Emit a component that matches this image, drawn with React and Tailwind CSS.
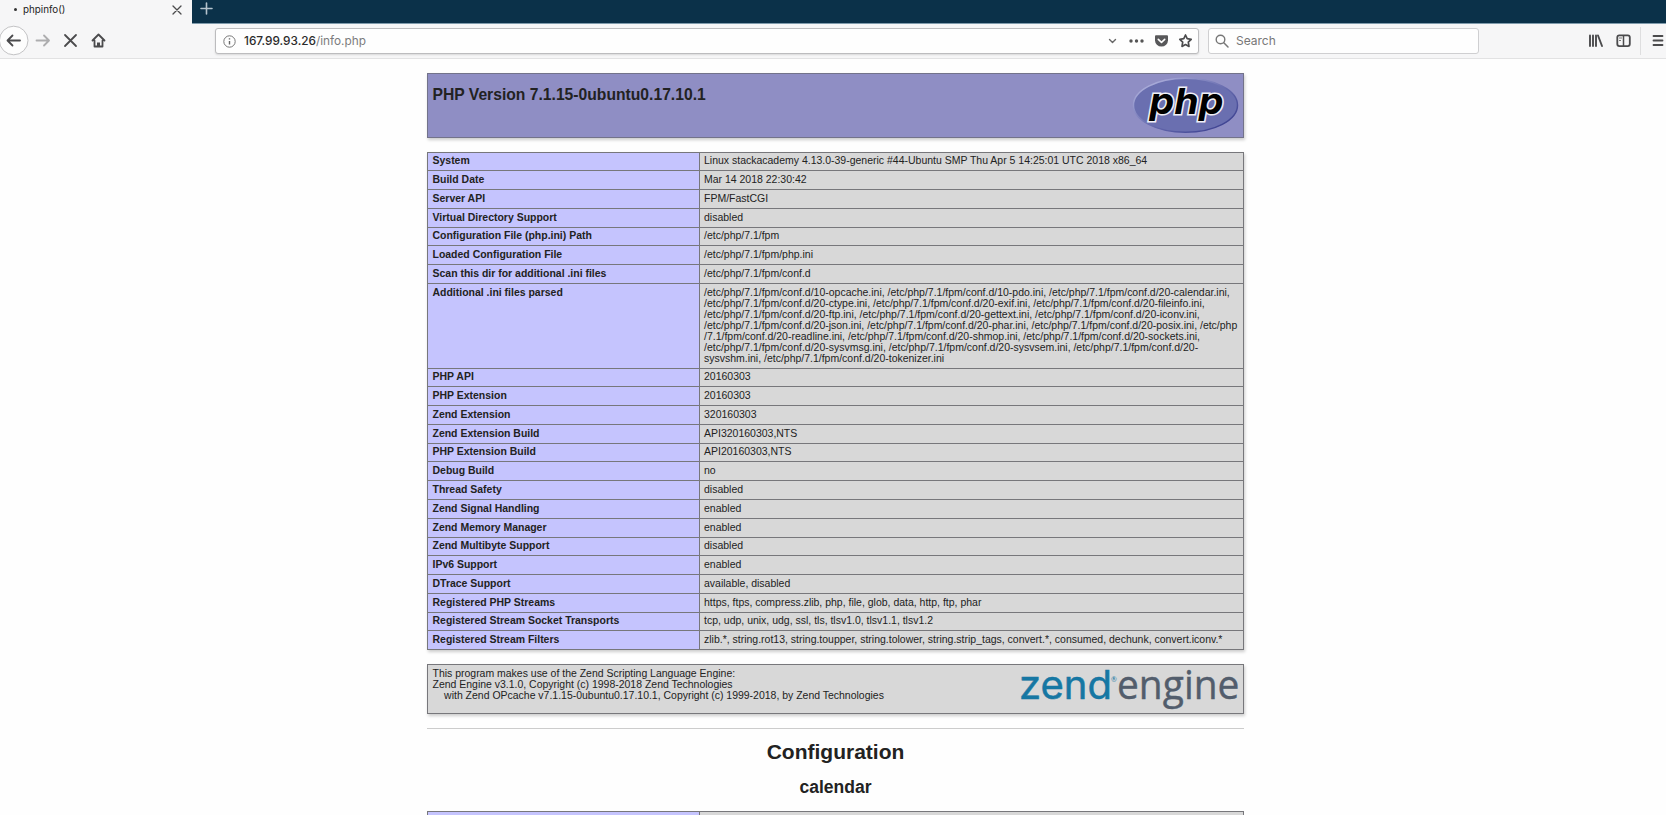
import React from "react";

const rows = [
  ["System", "Linux stackacademy 4.13.0-39-generic #44-Ubuntu SMP Thu Apr 5 14:25:01 UTC 2018 x86_64"],
  ["Build Date", "Mar 14 2018 22:30:42"],
  ["Server API", "FPM/FastCGI"],
  ["Virtual Directory Support", "disabled"],
  ["Configuration File (php.ini) Path", "/etc/php/7.1/fpm"],
  ["Loaded Configuration File", "/etc/php/7.1/fpm/php.ini"],
  ["Scan this dir for additional .ini files", "/etc/php/7.1/fpm/conf.d"],
  [
    "Additional .ini files parsed",
    [
      "/etc/php/7.1/fpm/conf.d/10-opcache.ini, /etc/php/7.1/fpm/conf.d/10-pdo.ini, /etc/php/7.1/fpm/conf.d/20-calendar.ini,",
      "/etc/php/7.1/fpm/conf.d/20-ctype.ini, /etc/php/7.1/fpm/conf.d/20-exif.ini, /etc/php/7.1/fpm/conf.d/20-fileinfo.ini,",
      "/etc/php/7.1/fpm/conf.d/20-ftp.ini, /etc/php/7.1/fpm/conf.d/20-gettext.ini, /etc/php/7.1/fpm/conf.d/20-iconv.ini,",
      "/etc/php/7.1/fpm/conf.d/20-json.ini, /etc/php/7.1/fpm/conf.d/20-phar.ini, /etc/php/7.1/fpm/conf.d/20-posix.ini, /etc/php",
      "/7.1/fpm/conf.d/20-readline.ini, /etc/php/7.1/fpm/conf.d/20-shmop.ini, /etc/php/7.1/fpm/conf.d/20-sockets.ini,",
      "/etc/php/7.1/fpm/conf.d/20-sysvmsg.ini, /etc/php/7.1/fpm/conf.d/20-sysvsem.ini, /etc/php/7.1/fpm/conf.d/20-",
      "sysvshm.ini, /etc/php/7.1/fpm/conf.d/20-tokenizer.ini",
    ],
  ],
  ["PHP API", "20160303"],
  ["PHP Extension", "20160303"],
  ["Zend Extension", "320160303"],
  ["Zend Extension Build", "API320160303,NTS"],
  ["PHP Extension Build", "API20160303,NTS"],
  ["Debug Build", "no"],
  ["Thread Safety", "disabled"],
  ["Zend Signal Handling", "enabled"],
  ["Zend Memory Manager", "enabled"],
  ["Zend Multibyte Support", "disabled"],
  ["IPv6 Support", "enabled"],
  ["DTrace Support", "available, disabled"],
  ["Registered PHP Streams", "https, ftps, compress.zlib, php, file, glob, data, http, ftp, phar"],
  ["Registered Stream Socket Transports", "tcp, udp, unix, udg, ssl, tls, tlsv1.0, tlsv1.1, tlsv1.2"],
  ["Registered Stream Filters", "zlib.*, string.rot13, string.toupper, string.tolower, string.strip_tags, convert.*, consumed, dechunk, convert.iconv.*"],
];

function Row({ label, value }) {
  const lines = Array.isArray(value) ? value : [value];
  return (
    <div className="flex border-t border-[#77777b]">
      <div className="w-[272px] shrink-0 border-r border-[#77777b] bg-[#c5c4fe] pt-[2.77px] pb-[4px] pl-[4.5px] font-bold">{label}</div>
      <div className="flex-1 bg-[#d8d8d8] pt-[2.77px] pb-[4px] pl-[4px] text-[10.49px] whitespace-nowrap">
        {lines.map((line) => (
          <div key={line}>{line}</div>
        ))}
      </div>
    </div>
  );
}

function PhpLogo() {
  return (
    <svg className="overflow-visible" width="107" height="58" viewBox="0 0 107 58">
      <defs>
        <linearGradient id="rim" x1="0" y1="0" x2="1" y2="1">
          <stop offset="0.1" stopColor="#aeb0dc" />
          <stop offset="0.55" stopColor="#6468ac" />
          <stop offset="0.9" stopColor="#3c4190" />
        </linearGradient>
      </defs>
      <ellipse cx="53.5" cy="28.3" rx="52" ry="27" fill="#6a6fb0" stroke="url(#rim)" strokeWidth="1.5" />
      <text x="17.5" y="37.3" textLength="74" lengthAdjust="spacingAndGlyphs" fontFamily="Inter" fontWeight="700" fontStyle="italic" fontSize="36" fill="#000" stroke="#f0f0f6" strokeWidth="3" paintOrder="stroke">php</text>
    </svg>
  );
}

function ZendLogo() {
  return (
    <svg className="overflow-visible" width="222" height="48" viewBox="0 0 222 48">
      <text x="0" y="34" textLength="93" lengthAdjust="spacingAndGlyphs" fontFamily="Inter" fontSize="39" fill="#1677a3" stroke="#1677a3" strokeWidth="0.5">zend</text>
      <text x="92" y="17" fontFamily="Lato, sans-serif" fontSize="7" fill="#1677a3">®</text>
      <text x="98" y="34" textLength="122.5" lengthAdjust="spacingAndGlyphs" fontFamily="Open Sans, sans-serif" fontSize="40" fill="#525d6c" stroke="#525d6c" strokeWidth="0.4">engine</text>
    </svg>
  );
}

const stroke = { fill: "none", stroke: "#4b4b4d", strokeWidth: 1.8, strokeLinecap: "round", strokeLinejoin: "round" };

function Browser() {
  return (
    <header className="font-[Inter,sans-serif]">
      <div className="flex h-[24px] border-b border-[#7f9bac] bg-[#0b3149]">
        <div className="flex h-[24px] w-[192px] items-center bg-[#f6f6f7] pr-[10px] pb-[5px] pl-[14px] text-[9.8px] text-[#222]">
          <span className="size-[3px] rounded-full bg-[#333]" />
          <span className="ml-[6px] flex-1 pt-[2px]">phpinfo()</span>
          <svg width="10" height="10" viewBox="0 0 10 10"><path d="M1 1l8 8M9 1l-8 8" {...stroke} strokeWidth="1.3" /></svg>
        </div>
        <svg className="mt-[2px] ml-[8px]" width="13" height="13" viewBox="0 0 13 13"><path d="M6.5 1v11M1 6.5h11" fill="none" stroke="#b5c3cd" strokeWidth="1.6" strokeLinecap="round" /></svg>
      </div>
      <div className="flex h-[35px] items-center border-b border-[#e2e2e3] bg-[#f6f6f7]">
        <svg width="108" height="34" viewBox="0 0 108 34">
          <circle cx="13.7" cy="16.5" r="14.3" fill="#fdfdfd" stroke="#c3c3c5" />
          <path d="M20 16.500H8M12.500 11.500L7.500 16.500l5 5" {...stroke} />
          <path d="M36.500 16.500h12M44 11.500l5 5-5 5" {...stroke} stroke="#adadaf" />
          <path d="M65 11l11 11M76 11l-11 11" {...stroke} />
          <path d="M92.500 16.500l6-6 6 6M94.500 16.500v6h8v-6" {...stroke} />
          <path d="M97 23v-4.500h3V23z" fill="#4b4b4d" />
        </svg>
        <div className="ml-[107px] flex h-[26px] w-[984px] items-center rounded-[3px] border border-[#bcbcbe] bg-[#fefefe] pl-[7px] shadow-[0_1px_2px_rgba(0,0,0,0.12)]">
          <svg width="13" height="13" viewBox="0 0 13 13"><circle cx="6.500" cy="6.500" r="5.700" fill="none" stroke="#777" /><path d="M6.500 6v3.500M6.500 3.300v1.200" stroke="#666" strokeWidth="1.400" /></svg>
          <span className="ml-[8px] flex-1 pt-[2px] text-[11.800px] text-[#7b7b7d]"><span className="font-medium text-[#2b2b2b]">167.99.93.26</span>/info.php</span>
          <svg width="95" height="24" viewBox="0 0 95 24">
            <path d="M6.500 10.500l3 3 3-3" {...stroke} stroke="#666" strokeWidth="1.400" />
            <g fill="#555"><circle cx="28" cy="12" r="1.700" /><circle cx="33.500" cy="12" r="1.700" /><circle cx="39" cy="12" r="1.700" /></g>
            <path d="M53 6.200h11q1 0 1 1v4a6.500 6.300 0 0 1-13 0v-4q0-1 1-1z" fill="#58585a" />
            <path d="M55.300 10.300l3.200 3 3.200-3" {...stroke} stroke="#fff" strokeWidth="1.600" />
            <path d="M82.500 6l1.700 3.700 4 .6-2.900 2.800.7 4.300-3.500-1.900-3.500 1.900.7-4.300-2.900-2.800 4-.6z" {...stroke} strokeWidth="1.700" />
          </svg>
        </div>
        <div className="ml-[9px] flex h-[26px] w-[271px] items-center rounded-[3px] border border-[#cfcfd1] bg-[#fefefe] pl-[6px] text-[12px] text-[#777]">
          <svg width="14" height="14" viewBox="0 0 14 14"><circle cx="5.500" cy="5.500" r="4.300" fill="none" stroke="#777" strokeWidth="1.400" /><path d="M8.800 8.800l4.200 4.200" stroke="#777" strokeWidth="1.500" strokeLinecap="round" /></svg>
          <span className="ml-[7px]">Search</span>
        </div>
        <svg className="ml-[104px]" width="83" height="34" viewBox="0 0 83 34">
          <path d="M7 11.500v10.500M10 11.500v10.500M13 11.500v10.500M15 11.500l4 10.500" {...stroke} strokeWidth="1.900" />
          <rect x="34.300" y="11.300" width="12.500" height="10.800" rx="2" {...stroke} strokeWidth="1.800" />
          <path d="M40.500 12v10" {...stroke} strokeWidth="1.500" />
          <path d="M36 14h3M36 16.500h2" stroke="#777" />
          <path d="M57.500 3v28" stroke="#dededf" />
          <path d="M70.500 12h9M70.500 16.500h9M70.500 21h9" {...stroke} />
        </svg>
      </div>
    </header>
  );
}

export default function App() {
  return (
    <div className="h-[815px] w-[1666px] overflow-hidden bg-[#fefefe] font-['Liberation_Sans',Arial,sans-serif] text-[#222]">
      <Browser />
      <main className="ml-[427px] w-[817px] pt-[14px] text-[10.480px] leading-[11px]">
        <section className="flex h-[65px] justify-between border border-[#73738a] bg-[#8f8ec4] pt-[3px] pr-[4px] pl-[4.500px] shadow-[1px_2px_3px_#ccc]">
          <h1 className="pt-[8px] text-[15.680px] leading-[20px] font-bold">PHP Version 7.1.15-0ubuntu0.17.10.1</h1>
          <PhpLogo />
        </section>
        <section className="mt-[13.500px] border-x border-b border-[#77777b] shadow-[1px_2px_3px_#ccc]">
          {rows.map(([label, value]) => (
            <Row key={label} label={label} value={value} />
          ))}
        </section>
        <section className="mt-[14px] flex h-[50px] justify-between border border-[#77777b] bg-[#d8d8d8] pr-[2px] pl-[4.500px] shadow-[1px_2px_3px_#ccc]">
          <div className="pt-[3px]">
            <div>This program makes use of the Zend Scripting Language Engine:</div>
            <div>Zend Engine v3.1.0, Copyright (c) 1998-2018 Zend Technologies</div>
            <div className="pl-[11.600px]">with Zend OPcache v7.1.15-0ubuntu0.17.10.1, Copyright (c) 1999-2018, by Zend Technologies</div>
          </div>
          <ZendLogo />
        </section>
        <hr className="mt-[14px] border-[#ccc]" />
        <h2 className="mt-[11px] text-center text-[21px] leading-[24px] font-bold">Configuration</h2>
        <h3 className="mt-[12.500px] text-center text-[17.500px] leading-[20px] font-bold">calendar</h3>
        <section className="mt-[14.500px] flex h-[20px] border border-[#77777b]">
          <div className="w-[272px] border-r border-[#77777b] bg-[#c5c4fe]" />
          <div className="flex-1 bg-[#d8d8d8]" />
        </section>
      </main>
    </div>
  );
}
